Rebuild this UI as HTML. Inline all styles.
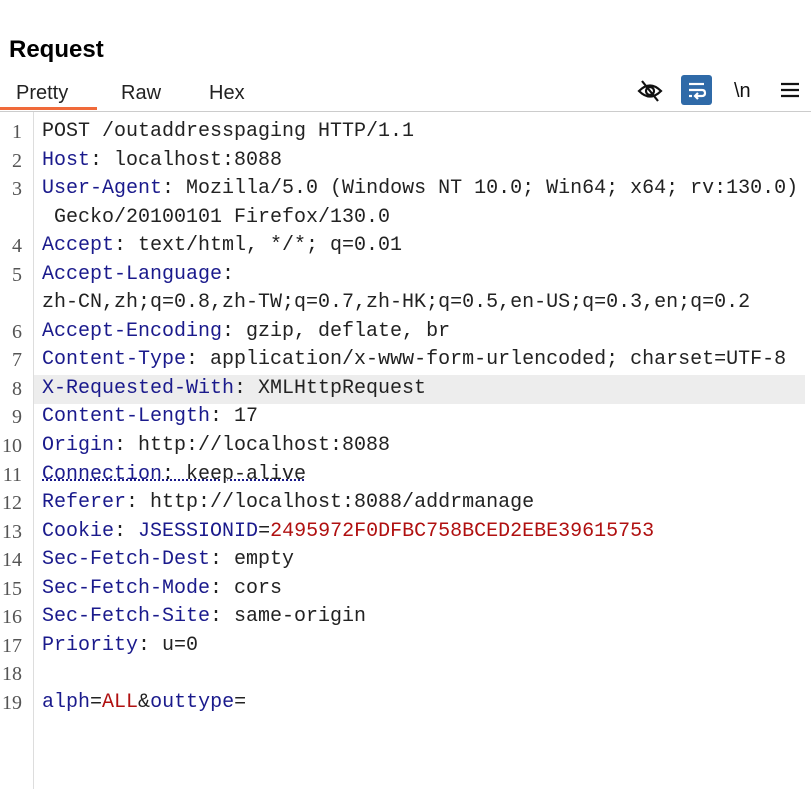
<!DOCTYPE html>
<html><head><style>
body{margin:0;width:811px;height:789px;background:#fff;overflow:hidden;font-family:"Liberation Sans",sans-serif;position:relative}
h1{position:absolute;left:9px;top:36px;margin:0;font-size:24px;font-weight:bold;color:#000}
.tab{position:absolute;top:82px;font-size:20px;color:#222}
.ul{position:absolute;left:0;top:107px;width:97px;height:3px;background:#f06a3a}
.sep{position:absolute;left:0;top:111px;width:811px;height:1px;background:#ccc}
.gut{position:absolute;left:33px;top:112px;width:1px;height:677px;background:#ddd}
.hl{position:absolute;left:34px;top:375px;width:771px;height:29px;background:#ededed}
.code{position:absolute;top:118px;left:0;font-family:"Liberation Mono",monospace;font-size:20px;line-height:28.55px;color:#222}
.r{height:28.55px;white-space:pre;position:relative}
.n{position:absolute;left:0;width:22px;text-align:right;color:#555;font-family:"Liberation Serif",serif}
.t{position:absolute;left:42px}
.k{color:#1a1a8c}.v{color:#b01010}
.dot{text-decoration:underline dotted #1a1a8c}
</style></head><body>
<h1>Request</h1>
<div class="tab" style="left:16px">Pretty</div>
<div class="tab" style="left:121px">Raw</div>
<div class="tab" style="left:209px">Hex</div>
<div class="ul"></div><div class="sep"></div>
<svg style="position:absolute;left:637px;top:78px" width="26" height="26" viewBox="0 0 26 26" fill="none" stroke="#111" stroke-width="2.2"><path d="M2 13 Q13 2 24 13 Q13 24 2 13Z"/><circle cx="13" cy="13" r="4"/><path d="M5 3 L21 23"/></svg>
<div style="position:absolute;left:681px;top:75px;width:31px;height:30px;background:#2f6aa8;border-radius:3px"></div>
<svg style="position:absolute;left:681px;top:75px" width="31" height="30" fill="none" stroke="#fff" stroke-width="2.2"><path d="M8 9 H23"/><path d="M8 15 H21 Q24 15 24 18 Q24 21 21 21 H15"/><path d="M17 18 L14 21 L17 24"/><path d="M8 21 H11"/></svg>
<div style="position:absolute;left:734px;top:80px;font-size:20px;color:#111">\n</div>
<svg style="position:absolute;left:781px;top:82px" width="18" height="16" stroke="#111" stroke-width="2.2"><path d="M0 2H18M0 8H18M0 14H18"/></svg>
<div class="gut"></div><div class="hl"></div>
<div class="code">
<div class="r"><span class="n">1</span><span class="t">POST /outaddresspaging HTTP/1.1</span></div>
<div class="r"><span class="n">2</span><span class="t"><span class="k">Host</span>: localhost:8088</span></div>
<div class="r"><span class="n">3</span><span class="t"><span class="k">User-Agent</span>: Mozilla/5.0 (Windows NT 10.0; Win64; x64; rv:130.0)</span></div>
<div class="r"><span class="t"> Gecko/20100101 Firefox/130.0</span></div>
<div class="r"><span class="n">4</span><span class="t"><span class="k">Accept</span>: text/html, */*; q=0.01</span></div>
<div class="r"><span class="n">5</span><span class="t"><span class="k">Accept-Language</span>:</span></div>
<div class="r"><span class="t">zh-CN,zh;q=0.8,zh-TW;q=0.7,zh-HK;q=0.5,en-US;q=0.3,en;q=0.2</span></div>
<div class="r"><span class="n">6</span><span class="t"><span class="k">Accept-Encoding</span>: gzip, deflate, br</span></div>
<div class="r"><span class="n">7</span><span class="t"><span class="k">Content-Type</span>: application/x-www-form-urlencoded; charset=UTF-8</span></div>
<div class="r"><span class="n">8</span><span class="t"><span class="k">X-Requested-With</span>: XMLHttpRequest</span></div>
<div class="r"><span class="n">9</span><span class="t"><span class="k">Content-Length</span>: 17</span></div>
<div class="r"><span class="n">10</span><span class="t"><span class="k">Origin</span>: http://localhost:8088</span></div>
<div class="r"><span class="n">11</span><span class="t dot"><span class="k">Connection</span>: keep-alive</span></div>
<div class="r"><span class="n">12</span><span class="t"><span class="k">Referer</span>: http://localhost:8088/addrmanage</span></div>
<div class="r"><span class="n">13</span><span class="t"><span class="k">Cookie</span>: <span class="k">JSESSIONID</span>=<span class="v">2495972F0DFBC758BCED2EBE39615753</span></span></div>
<div class="r"><span class="n">14</span><span class="t"><span class="k">Sec-Fetch-Dest</span>: empty</span></div>
<div class="r"><span class="n">15</span><span class="t"><span class="k">Sec-Fetch-Mode</span>: cors</span></div>
<div class="r"><span class="n">16</span><span class="t"><span class="k">Sec-Fetch-Site</span>: same-origin</span></div>
<div class="r"><span class="n">17</span><span class="t"><span class="k">Priority</span>: u=0</span></div>
<div class="r"><span class="n">18</span></div>
<div class="r"><span class="n">19</span><span class="t"><span class="k">alph</span>=<span class="v">ALL</span>&amp;<span class="k">outtype</span>=</span></div>
</div>
</body></html>
